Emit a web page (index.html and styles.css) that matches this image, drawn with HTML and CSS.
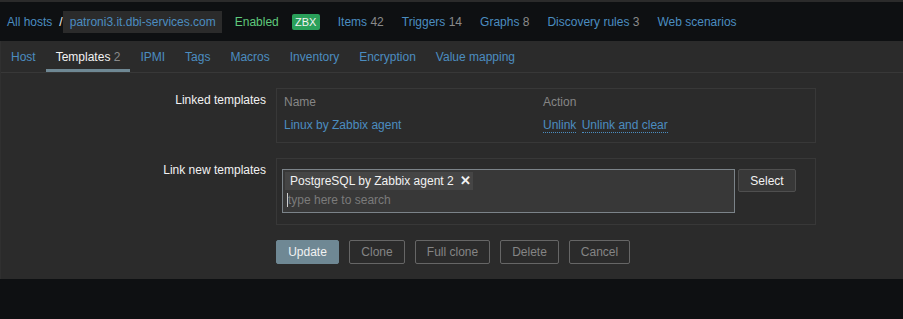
FILE: index.html
```html
<!DOCTYPE html>
<html>
<head>
<meta charset="utf-8">
<link rel="stylesheet" href="styles.css">
</head>
<body>
<div class="topstrip"></div>
<nav class="nav">
  <a class="link">All hosts</a>
  <span class="sep">/</span>
  <span class="crumb">patroni3.it.dbi-services.com</span>
  <span class="enabled">Enabled</span>
  <span class="badge">ZBX</span>
  <a class="link item">Items <span class="count">42</span></a>
  <a class="link item">Triggers <span class="count">14</span></a>
  <a class="link item">Graphs <span class="count">8</span></a>
  <a class="link item">Discovery rules <span class="count">3</span></a>
  <a class="link item">Web scenarios</a>
</nav>
<div class="card">
  <div class="tabs">
    <a class="tab">Host</a>
    <a class="tab active">Templates <span class="count">2</span></a>
    <a class="tab">IPMI</a>
    <a class="tab">Tags</a>
    <a class="tab">Macros</a>
    <a class="tab">Inventory</a>
    <a class="tab">Encryption</a>
    <a class="tab">Value mapping</a>
  </div>
  <div class="form">
    <div class="label">Linked templates</div>
    <div class="box box-linked">
      <div class="trow thead">
        <div class="cname">Name</div>
        <div class="caction">Action</div>
      </div>
      <div class="trow">
        <div class="cname"><a class="link">Linux by Zabbix agent</a></div>
        <div class="caction"><a class="link dotted">Unlink</a> <a class="link dotted">Unlink and clear</a></div>
      </div>
    </div>

    <div class="label">Link new templates</div>
    <div class="box box-new">
      <div class="ms">
        <div class="chip">PostgreSQL by Zabbix agent 2 <span class="x">✕</span></div>
        <div class="search"><span class="caret"></span><span class="ph">type here to search</span></div>
      </div>
      <button class="btn-select">Select</button>
    </div>

    <div></div>
    <div class="buttons">
      <button class="btn primary">Update</button>
      <button class="btn alt w-clone">Clone</button>
      <button class="btn alt w-full">Full clone</button>
      <button class="btn alt w-delete">Delete</button>
      <button class="btn alt w-cancel">Cancel</button>
    </div>
  </div>
</div>
</body>
</html>
```
FILE: styles.css
```css
* { box-sizing: border-box; }
html, body { margin: 0; padding: 0; }
body {
  background: #0e1012;
  font-family: "Liberation Sans", Arial, sans-serif;
  font-size: 12px;
  color: #f2f2f2;
  width: 903px;
  height: 319px;
  overflow: hidden;
}
.topstrip { height: 2px; background: #2b2b2b; }
.nav {
  height: 39px;
  display: flex;
  align-items: center;
  padding-left: 7px;
  background: #0e1012;
  white-space: nowrap;
}
.link { color: #4b8dc0; text-decoration: none; }
.count { color: #8a8a8a; }
.sep { color: #f2f2f2; margin-left: 7px; margin-right: 0; }
.crumb {
  background: #2b2b2b;
  color: #4b8dc0;
  height: 22px;
  line-height: 22px;
  padding: 0 7px;
  width: 159px;
}
.enabled { color: #5fc97c; margin-left: 13px; }
.badge {
  margin-left: 13px;
  background: #2aa05a;
  color: #f2f2f2;
  font-size: 11px;
  height: 16px;
  line-height: 16px;
  border-radius: 2px;
  width: 28px;
  text-align: center;
}
.item { margin-left: 18px; }

.card {
  background: #2b2b2b;
  border-left: 1px solid #303030;
  height: 238px;
}
.tabs {
  display: flex;
  height: 32px;
  border-bottom: 1px solid #383838;
}
.tab {
  color: #4b8dc0;
  padding: 1px 10px 0 10px;
  line-height: 30px;
  height: 31px;
  white-space: nowrap;
}
.tab.active {
  color: #f2f2f2;
  border-bottom: 3px solid #6f8894;
}
.form {
  display: grid;
  grid-template-columns: 265px 540px;
  column-gap: 10px;
  row-gap: 15px;
  padding-top: 15px;
}
.label {
  text-align: right;
  padding-top: 5px;
  line-height: 14px;
}
.box { border: 1px solid #383838; }
.box-linked { padding: 1px 7px 6px 7px; }
.trow { display: flex; height: 23px; align-items: center; }
.cname { width: 259px; }
.thead { color: #868686; }
.dotted { border-bottom: 1px dotted #4b8dc0; }
.caction .dotted + .dotted { margin-left: 2px; }

.box-new {
  display: flex;
  align-items: flex-start;
  padding: 10px 0 10px 5px;
  height: 67px;
}
.ms {
  width: 453px;
  height: 44px;
  background: #383838;
  border: 1px solid #7b8389;
  padding: 2px;
}
.chip {
  display: inline-block;
  background: #454545;
  color: #f2f2f2;
  height: 18px;
  line-height: 18px;
  padding: 0 5px;
  width: 188px;
  white-space: nowrap;
}
.x { font-weight: bold; margin-left: 3px; font-size: 13px; }
.search {
  height: 20px;
  line-height: 20px;
  display: flex;
  align-items: center;
  padding-left: 2px;
}
.caret { width: 1px; height: 14px; background: #cfcfcf; }
.ph { color: #7b7b7b; }
.btn-select {
  margin-left: 3px;
  width: 58px;
  height: 23px;
  background: #383838;
  border: 1px solid #4f4f4f;
  border-radius: 2px;
  color: #f2f2f2;
  font-family: inherit;
  font-size: 12px;
  padding: 0;
}
.buttons { display: flex; gap: 10px; }
.btn {
  height: 24px;
  font-family: inherit;
  font-size: 12px;
  border-radius: 2px;
  padding: 0;
}
.primary {
  background: #6f8894;
  border: 1px solid #6f8894;
  color: #f2f2f2;
  width: 63px;
}
.alt {
  background: transparent;
  border: 1px solid #666;
  color: #858585;
}
.w-clone { width: 56px; }
.w-full { width: 75px; }
.w-delete { width: 59px; }
.w-cancel { width: 61px; }
```
